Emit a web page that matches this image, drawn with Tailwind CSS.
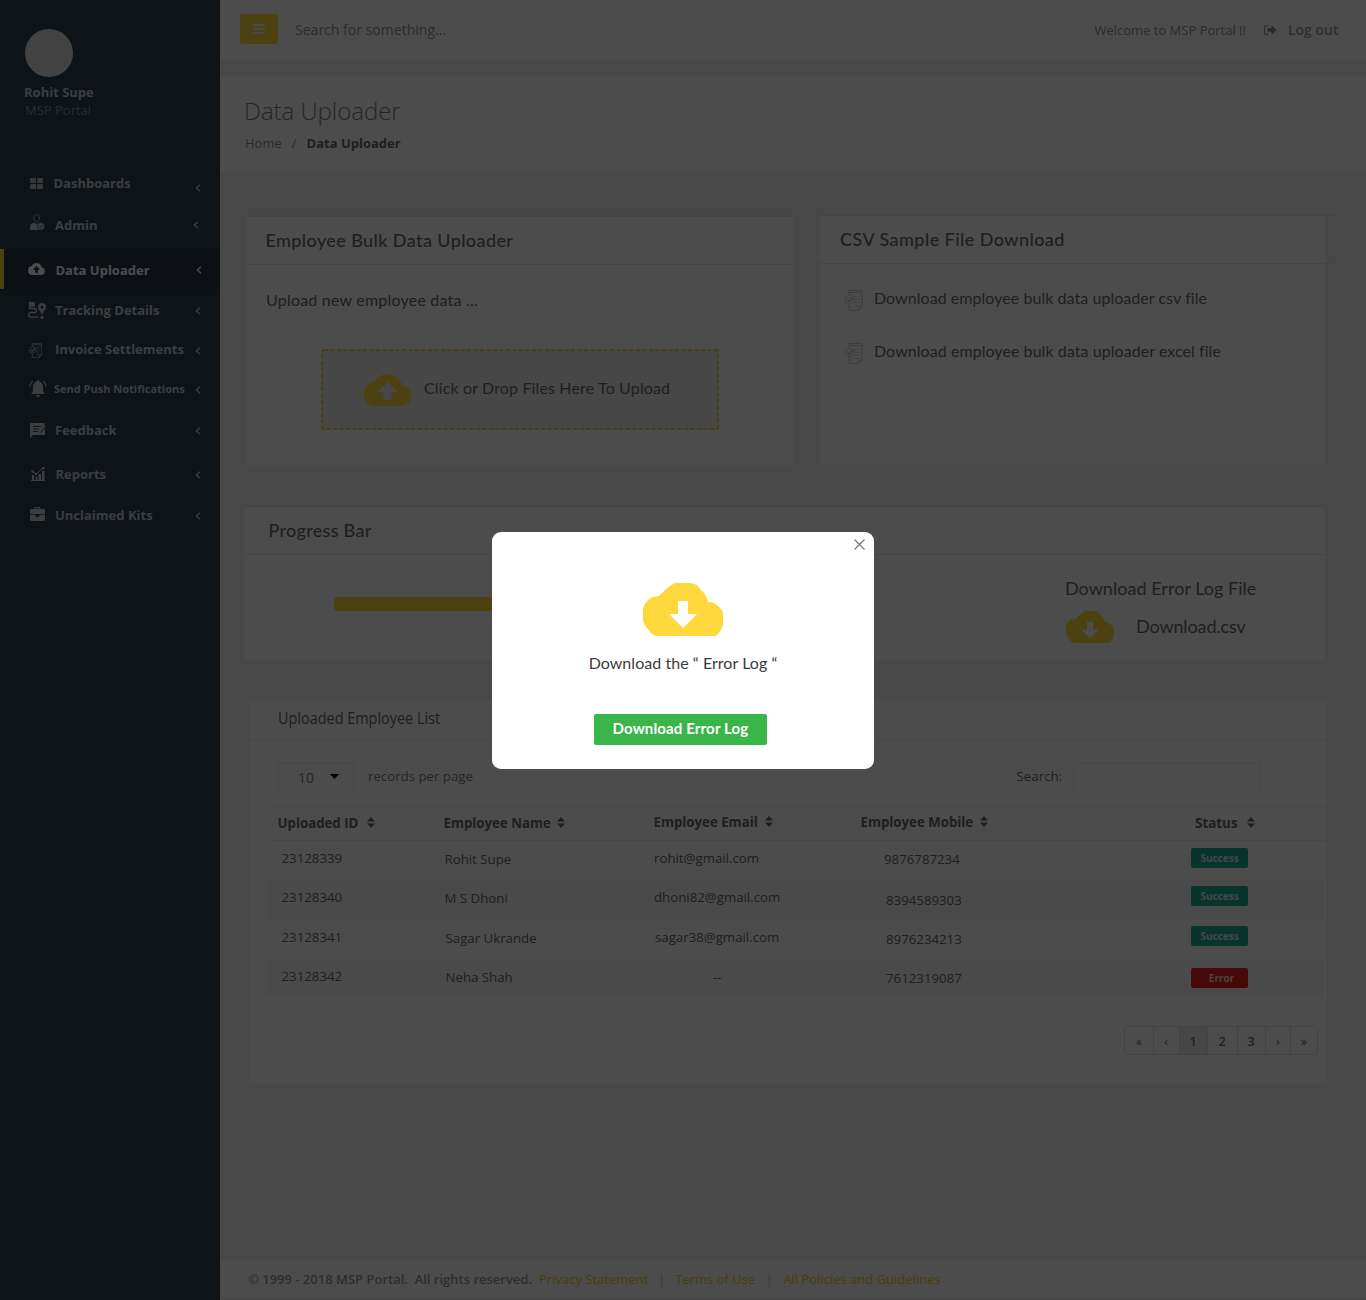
<!DOCTYPE html>
<html lang="en">
<head>
<meta charset="utf-8">
<title>MSP Portal - Data Uploader</title>
<script src="https://cdn.jsdelivr.net/npm/@tailwindcss/browser@4"></script>
</head>
<body class="h-[1300px] overflow-hidden bg-[#f1f1f1] font-['Open_Sans',sans-serif] text-[13px] leading-5 text-[#676a6c]">

<svg class="hidden">
  <symbol id="chev" viewBox="0 0 6 8"><path d="M5 .8 1.4 4 5 7.2" fill="none" stroke="currentColor" stroke-width="1.4"/></symbol>
  <symbol id="sort" viewBox="0 0 8 11"><path d="M4 0 8 4.5H0zM4 11 0 6.5h8z" fill="currentColor"/></symbol>
  <symbol id="invoice" viewBox="0 0 18 21">
    <g fill="none" stroke="currentColor" stroke-width="1">
      <path d="M4.5 4.5v-4h13v16.5l-3.5 3.5H4.5v-6M4.5 2.5h13M14 20.500v-3.500h3.500"/>
      <circle cx="5" cy="9.500" r="4.500"/>
      <path d="m2.800 9.500 1.800 1.800L8 7.500" stroke-width="1.600"/>
      <path d="M10 6.500h2m1.500 0H15M11 9.500h1.500m1 0H15M10 12.500h2m1.500 0H15M10.500 15.500H14"/>
    </g>
  </symbol>
  <symbol id="cloud-down" viewBox="0 0 80 53">
    <path fill="currentColor" fill-rule="evenodd" d="M12 53 8 50 4 45 1 41 0 37V25l2-4 3-4 4-3 7-1 6-6 5-4 5-3h16l6 2 3 4 4 4 3 5 1 4h4l5 3 4 4 2 3v13l-2 5-5 6zM35 18v13h-9l14 14 14-14h-9V18z"/>
  </symbol>
  <symbol id="cloud-up" viewBox="0 0 48 32">
    <path fill="currentColor" fill-rule="evenodd" d="M38.700 12.100A15 15 0 0 0 10.700 8.100 12 12 0 0 0 12 32h26a10 10 0 0 0 .7-19.900zM28 18v8h-8v-8h-6l10-10 10 10z"/>
  </symbol>
</svg>

<div class="flex h-[1300px]">
  <aside class="w-[220px] shrink-0 bg-[#2f4050] text-[#c9ccd3]">
    <div class="h-[162px] pl-6 pt-[28.500px]">
      <div class="ml-px size-12 rounded-full bg-[#dcdcdc]"></div>
      <div class="mt-[5px] font-bold">Rohit Supe</div>
      <div class="-mt-[2px] ml-px text-[#8095a8]">MSP Portal</div>
    </div>
    <nav class="font-bold">
      <a class="flex h-[42px] items-center pl-[30px]">
        <svg class="w-[13px] h-[11px] text-[#b5b9c0]" viewBox="0 0 13 11" fill="currentColor"><rect width="6" height="5" rx="1"/><rect x="7" width="6" height="5" rx="1"/><rect y="6" width="6" height="5" rx="1"/><rect x="7" y="6" width="6" height="5" rx="1"/></svg>
        <span class="ml-[10.500px]">Dashboards</span><svg class="ml-auto mr-[19px] mt-[10px] w-1.5 h-2"><use href="#chev"/></svg>
      </a>
      <a class="flex h-[42px] items-center pl-[30px]">
        <svg class="-mt-[7px] w-[15px] h-4" viewBox="0 0 15 16"><ellipse cx="6.500" cy="4" rx="3" ry="3.700" fill="none" stroke="currentColor" stroke-width=".8"/><path d="M0 16v-3c0-3 2-4 4.500-4.500L6.500 10l2-1.500c2 .5 3 1 3.500 2.500v5z" fill="currentColor"/><circle cx="11" cy="12.300" r="3.700" fill="currentColor" stroke="#2f4050" stroke-width=".7"/><path d="m9.300 12.300 1.400 1.400 2.300-2.700" fill="none" stroke="#2f4050" stroke-width="1"/></svg>
        <span class="ml-[10px]">Admin</span><svg class="ml-auto mr-[21px] w-1.5 h-2"><use href="#chev"/></svg>
      </a>
      <a class="mt-[3px] flex h-10 items-center border-l-4 border-[#ffd93b] bg-[#293846] pl-6 pt-0.5 text-[#fafafa]">
        <svg class="-mt-[3px] w-[17px] h-3" viewBox="0 0 48 32" preserveAspectRatio="none"><use href="#cloud-up"/></svg>
        <span class="ml-[10.500px]">Data Uploader</span><svg class="ml-auto mr-[18.500px] w-1.5 h-2"><use href="#chev"/></svg>
      </a>
      <a class="flex h-[42px] items-center pl-7">
        <svg class="w-[18px] h-[17px]" viewBox="0 0 18 17"><path d="M1.500 0v6.500M2 1h4v3H2zM1 6.500h5.500a2 2 0 0 1 0 4H3a2.300 2.300 0 0 0 0 4.700h7.500" fill="none" stroke="currentColor" stroke-width="1.300"/><path fill="currentColor" fill-rule="evenodd" d="M2 0h4.500v4H2zM14 1a4 4 0 0 1 4 4c0 2.500-3 5-4 8-1-3-4-5.500-4-8a4 4 0 0 1 4-4zm0 2.500a1.600 1.600 0 1 0 0 3.200 1.600 1.600 0 0 0 0-3.200z"/><circle cx="14" cy="15.300" r="1.600" fill="currentColor"/></svg>
        <span class="ml-[9px]">Tracking Details</span><svg class="ml-auto mr-[19px] mt-[2px] w-1.5 h-2"><use href="#chev"/></svg>
      </a>
      <a class="flex h-[37px] items-center pl-[29px]">
        <svg class="mt-px w-[13px] h-[15px]"><use href="#invoice"/></svg>
        <span class="-mt-px ml-[13px]">Invoice Settlements</span><svg class="ml-auto mr-[19px] mt-[3px] w-1.5 h-2"><use href="#chev"/></svg>
      </a>
      <a class="flex h-[42px] items-center pl-[29px] text-[11px]">
        <svg class="-mt-px w-[18px] h-[17px]" viewBox="0 0 18 17"><path fill="currentColor" d="M9 0c.8 0 1 .6 1 1.200C13 2 14 4.500 14 7v4.500l2 2.500H2l2-2.500V7c0-2.500 1-5 4-5.800C8 .6 8.200 0 9 0zM7 15h4c-.3 2.500-3.700 2.500-4 0z"/><path d="M.7 6.500c.2-2.500 1.200-4 3-5.500M17.300 6.500c-.2-2.500-1.200-4-3-5.500" fill="none" stroke="currentColor" stroke-width="1.300"/></svg>
        <span class="ml-[7px]">Send Push Notifications</span><svg class="ml-auto mr-[19px] mt-[2px] w-1.5 h-2"><use href="#chev"/></svg>
      </a>
      <a class="flex h-[41px] items-center pl-[30px]">
        <svg class="w-4 h-[15px]" viewBox="0 0 16 15"><path fill="currentColor" d="M1 0h13.500v1L9 8v1.500h2L15 5v7H3l-3 3V1a1 1 0 0 1 1-1z"/><path fill="currentColor" d="m14 1.500 1.700 1.500-5.200 6L9 9.500V7.700z"/><path stroke="#2f4050" stroke-width=".9" d="M3 3.500h8M3 6h6M3 8.500h5"/></svg>
        <span class="-mt-[2px] ml-[9px]">Feedback</span><svg class="ml-auto mr-[19px] mt-px w-1.5 h-2"><use href="#chev"/></svg>
      </a>
      <a class="flex h-[46px] items-center pl-[31px]">
        <svg class="w-[14px] h-[14px]" viewBox="0 0 14 14"><path fill="currentColor" d="M0 13h14v1H0zM1 8h2v5H1zm3.500 1.500h2V13h-2zM7.500 7H10v6H7.500zm3.500-3h2.500v9H11z"/><path d="M1 4.500 5 7l7-6" fill="none" stroke="currentColor"/><circle cx="1.500" cy="4.500" r="1.200" fill="currentColor"/><circle cx="5" cy="7" r="1.200" fill="currentColor"/><circle cx="12.300" cy="1.300" r="1.300" fill="currentColor"/></svg>
        <span class="ml-[10.500px]">Reports</span><svg class="ml-auto mr-[19px] mt-[2px] w-1.5 h-2"><use href="#chev"/></svg>
      </a>
      <a class="flex h-9 items-center pl-[30px]">
        <svg class="-mt-[2px] w-[15px] h-[14px]" viewBox="0 0 15 14" fill="currentColor"><path fill-rule="evenodd" d="M4.500 2V.8L5.300 0h4.400l.8.8V2H14l1 1v4H0V3l1-1zm1.200 0h3.600v-.8H5.700z"/><path d="M0 7.800h5.500v1.400l2 1 2-1V7.800H15V13l-1 1H1l-1-1z"/></svg>
        <span class="ml-[10px]">Unclaimed Kits</span><svg class="ml-auto mr-[19px] mt-px w-1.5 h-2"><use href="#chev"/></svg>
      </a>
    </nav>
  </aside>

  <div class="flex w-[1146px] flex-col pl-px">
    <header class="flex h-[60px] items-center bg-white pl-[19px] pr-[27.500px]">
      <button class="-mt-[2px] flex h-[30px] w-[38px] items-center justify-center rounded-[3px] bg-[#ffd93b]">
        <svg class="w-3 h-[10px]" viewBox="0 0 12 10"><path stroke="#f4f4f4" stroke-width="2" d="M0 1h12M0 5h12M0 9h12"/></svg>
      </button>
      <span class="ml-[17px] text-sm tracking-[.02px] text-[#8d9092]">Search for something...</span>
      <span class="ml-auto text-[#8d9092]">Welcome to MSP Portal !!</span>
      <svg class="ml-[18px] w-[13px] h-[10px]" viewBox="0 0 13 10"><path d="M4.500.6H2A1.400 1.400 0 0 0 .6 2v6A1.400 1.400 0 0 0 2 9.400h2.500" fill="none" stroke="#999" stroke-width="1.100"/><path fill="#8a8d8f" d="M3.500 3.200h4V.3L12.700 5 7.500 9.700V6.800h-4z"/></svg>
      <span class="ml-[11px] text-sm font-semibold text-[#999c9e]">Log out</span>
    </header>
    <section class="mt-4 h-[97px] bg-white pl-6 pt-[19px]">
      <h1 class="-ml-px text-2xl font-light leading-8 tracking-[-.05px] text-[#7b7e80]">Data Uploader</h1>
      <p class="mt-[6px] flex"><span class="text-[#8b8e90]">Home</span><span class="ml-[10px] text-[#8b8e90]">/</span><b class="ml-[10px]">Data Uploader</b></p>
    </section>

    <main class="h-[1087px] pt-[41px]">
      <div class="flex pl-[25px] font-['Lato',sans-serif]">
        <section class="mt-px h-[250px] w-[548px] border-t-2 border-[#e6e7e9] bg-white">
          <h2 class="flex h-12 items-center border-b border-[#e4e6e8] pl-[19.500px] pb-[2px] text-lg font-medium tracking-[.4px]">Employee Bulk Data Uploader</h2>
          <p class="mt-[25px] pl-5 text-base leading-5 tracking-[.21px]">Upload new employee data ...</p>
          <div class="relative ml-[75px] mt-[39px] flex h-[81px] w-[398px] items-center bg-[#eeeeee] pl-[42px]">
            <svg class="absolute inset-0 h-full w-full"><rect x="1" y="1" width="396" height="79" rx="2" fill="none" stroke="#f0c81e" stroke-width="1.500" stroke-dasharray="4 2.500"/></svg>
            <svg class="w-12 h-8 text-[#ffd93b]" viewBox="0 0 47 32" preserveAspectRatio="none"><use href="#cloud-up" width="48" height="32"/></svg>
            <span class="-mt-[3px] ml-[13px] text-base tracking-[.14px]">Click or Drop Files Here To Upload</span>
          </div>
        </section>
        <section class="ml-[26px] w-[519px] border-t-2 border-[#e6e7e9]">
          <div class="h-[248px] w-[505px] bg-white">
            <h2 class="flex h-12 w-[519px] items-center border-b border-[#e6e7e9] pl-5 pb-px text-lg font-medium tracking-[.44px]">CSV Sample File Download</h2>
            <div class="mt-[23px] flex items-center pl-6 text-base leading-5 tracking-[.05px]"><svg class="mt-[3px] w-[19px] h-[21px] text-[#ccd1d8]"><use href="#invoice"/></svg><span class="-mt-[2px] ml-[11px]">Download employee bulk data uploader csv file</span></div>
            <div class="mt-[29px] flex items-center pl-6 text-base leading-5 tracking-[.06px]"><svg class="mt-[3px] w-[19px] h-[21px] text-[#ccd1d8]"><use href="#invoice"/></svg><span class="-mt-[2px] ml-[11px]">Download employee bulk data uploader excel file</span></div>
          </div>
        </section>
      </div>

      <section class="ml-[23px] mt-10 h-[155px] w-[1081px] border-t-2 border-[#e6e7e9] bg-white font-['Lato',sans-serif]">
        <h2 class="flex h-12 items-center border-b border-[#e4e6e8] pb-[2px] pl-[24.500px] text-lg font-medium tracking-[.28px]">Progress Bar</h2>
        <div class="flex">
          <div class="ml-[90px] mt-[42px] h-[14px] w-[400px] rounded bg-[#ffd93b]"></div>
          <div class="ml-auto mr-[68px] mt-[23px] w-[192px] whitespace-nowrap text-lg leading-5">
            <p class="tracking-[.03px]">Download Error Log File</p>
            <div class="mt-[13px] flex pl-px"><svg class="w-[48px] h-8 text-[#ffd93b]"><use href="#cloud-down"/></svg><span class="ml-[22px] mt-[5px] tracking-[-.12px]">Download.csv</span></div>
          </div>
        </div>
      </section>

      <section class="ml-7 mt-[39px] h-[385px] w-[1078px] bg-white text-[13.25px]">
        <div class="flex h-[42px] items-center border-b border-[#eeeff0] pb-[3px] pl-[29px]"><h2 class="origin-left scale-x-[.902] text-base">Uploaded Employee List</h2></div>
        <div class="flex h-[65px] pl-[28px] pt-[21px]">
          <div class="flex h-[31px] w-[78px] items-center border-2 border-[#f3f3f4] pl-[19px] text-sm"><span class="text-[#7a7d7f]">10</span><svg class="-mt-[2px] ml-4 w-[9px] h-[5px]" viewBox="0 0 9 5"><path d="M0 0h9L4.500 5z"/></svg></div>
          <span class="ml-[13px] mt-1 text-[#7a7d7f]">records per page</span>
          <span class="ml-auto mt-1">Search:</span>
          <div class="ml-[11px] mr-[66px] h-[31px] w-[188px] border-2 border-[#f3f3f4]"></div>
        </div>
        <div class="ml-5 flex h-[35px] border-y border-[#eeeff0] pb-px font-bold">
          <div class="flex w-[174.500px] items-center pl-[8.500px]">Uploaded ID<svg class="-mt-px ml-[9px] w-2 h-[11px]"><use href="#sort"/></svg></div>
          <div class="flex w-[210px] items-center">Employee Name<svg class="-mt-px ml-[6px] w-2 h-[11px]"><use href="#sort"/></svg></div>
          <div class="flex w-[207px] items-center pb-[2px]">Employee Email<svg class="-mt-px ml-[7px] w-2 h-[11px]"><use href="#sort"/></svg></div>
          <div class="flex w-[330px] items-center pb-[2px]">Employee Mobile<svg class="-mt-px ml-[7px] w-2 h-[11px]"><use href="#sort"/></svg></div>
          <div class="flex items-center pl-[4.500px] text-[13.400px]">Status<svg class="-mt-px ml-[9px] w-2 h-[11px]"><use href="#sort"/></svg></div>
        </div>
        <div class="ml-[17px] mr-[3px] flex h-[39px]">
          <div class="w-[178px] pl-[15.500px] pt-[7px]">23128339</div><div class="w-[210px] pl-[.5px] pt-[8px]">Rohit Supe</div><div class="w-[230px] pt-[7px]">rohit@gmail.com</div><div class="w-[307px] pt-[8px]">9876787234</div>
          <div class="mt-[7px] flex h-5 w-[57px] items-center justify-center rounded-[2px] bg-[#1ab394] text-[10.200px] font-bold tracking-[-.1px] text-[#dcefea]">Success</div>
        </div>
        <div class="ml-[17px] mr-[3px] flex h-[39px] bg-[#f8f8f8]">
          <div class="w-[178px] pl-[15.500px] pt-[7px]">23128340</div><div class="w-[210px] pl-[.5px] pt-[8px]">M S Dhoni</div><div class="w-[230px] pt-[7px]">dhoni82@gmail.com</div><div class="w-[307px] pl-[2px] pt-[10px]">8394589303</div>
          <div class="mt-[6px] flex h-5 w-[57px] items-center justify-center rounded-[2px] bg-[#1ab394] text-[10.200px] font-bold tracking-[-.1px] text-[#dcefea]">Success</div>
        </div>
        <div class="ml-[17px] mr-[3px] flex h-[40px]">
          <div class="w-[178px] pl-[15.500px] pt-[8px]">23128341</div><div class="w-[210px] pl-[1.500px] pt-[9px]">Sagar Ukrande</div><div class="w-[230px] pl-px pt-[8px]">sagar38@gmail.com</div><div class="w-[307px] pl-[2px] pt-[10px]">8976234213</div>
          <div class="mt-[7px] flex h-5 w-[57px] items-center justify-center rounded-[2px] bg-[#1ab394] pb-px text-[10.200px] font-bold tracking-[-.1px] text-[#dcefea]">Success</div>
        </div>
        <div class="ml-[17px] mr-[3px] flex h-[38px] bg-[#f8f8f8]">
          <div class="w-[178px] pl-[15.500px] pt-[7px]">23128342</div><div class="w-[210px] pl-[1.500px] pt-[8px]">Neha Shah</div><div class="w-[230px] pl-[59px] pt-[8px]">--</div><div class="w-[307px] pl-[2px] pt-[9px]">7612319087</div>
          <div class="mt-[9px] flex h-5 w-[57px] items-center justify-center rounded-[2px] bg-[#ed1c24] pl-1 text-[10.200px] font-bold tracking-[-.1px] text-[#f5dcdc]">Error</div>
        </div>
        <div class="ml-auto mr-[9px] mt-[29px] flex h-[29px] w-[194px] divide-x divide-[#e2e2e2] overflow-hidden rounded border border-[#e2e2e2] text-xs font-semibold [&>*]:flex [&>*]:items-center [&>*]:justify-center [&>*]:pt-0.5">
          <span class="w-[28.500px] font-normal">«</span><span class="w-[26px] font-normal">‹</span><span class="w-[28.500px] bg-[#eeeeee]">1</span><span class="w-[29.500px]">2</span><span class="w-[28.500px]">3</span><span class="w-[25px] font-normal">›</span><span class="flex-1 font-normal">»</span>
        </div>
      </section>
    </main>

    <footer class="flex h-[39px] items-center border-b border-[#e0e2e4] bg-white pl-[27px] text-[#f5cc1b]">
      <span class="whitespace-pre font-semibold text-[#96999b]">© 1999 - 2018 MSP Portal.  All rights reserved.</span>
      <a class="ml-[7px]">Privacy Statement</a><span class="ml-[10px]">|</span><a class="ml-[10px]">Terms of Use</a><span class="ml-[10.500px]">|</span><a class="ml-[10.500px]">All Policies and Guidelines</a>
    </footer>
  </div>
</div>

<div class="fixed inset-0 bg-black/70">
  <div role="dialog" class="absolute left-[492px] top-[532px] flex h-[237px] w-[382px] flex-col items-center rounded-[9px] bg-white font-['Lato',sans-serif]">
    <button class="mr-[9.500px] mt-[7px] h-[11px] self-end"><svg class="block w-[11px] h-[11px]" viewBox="0 0 11 11"><path d="m.5.5 10 10m0-10-10 10" fill="none" stroke="#777" stroke-width="1.200"/></svg></button>
    <svg class="mt-[33px] w-20 h-[53px] shrink-0 text-[#ffd93b]"><use href="#cloud-down"/></svg>
    <p class="mt-[17px] text-base leading-5 tracking-[.05px] text-[#3c3c3c]">Download the “ Error Log “</p>
    <button class="mr-[5px] mt-auto mb-6 h-[31px] w-[173px] rounded-[2px] bg-[#39b54a] pb-[3px] text-[15px] font-bold tracking-[.14px] text-white">Download Error Log</button>
  </div>
</div>
</body>
</html>
